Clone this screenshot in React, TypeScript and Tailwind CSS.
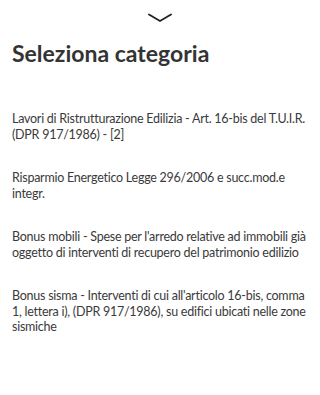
import React from "react";

const items: string[][] = [
  ["Lavori di Ristrutturazione Edilizia - Art. 16-bis del T.U.I.R.", "(DPR 917/1986) - [2]"],
  ["Risparmio Energetico Legge 296/2006 e succ.mod.e", "integr."],
  ["Bonus mobili - Spese per l'arredo relative ad immobili già", "oggetto di interventi di recupero del patrimonio edilizio"],
  ["Bonus sisma - Interventi di cui all'articolo 16-bis, comma", "1, lettera i), (DPR 917/1986), su edifici ubicati nelle zone", "sismiche"],
];

export default function App() {
  return (
    <div className="w-[320px] h-[395px] bg-white text-[#333333] overflow-hidden font-['Lato',sans-serif]">
      <div className="flex justify-center pt-[13px]">
        <svg width="24" height="10" viewBox="0 0 24 10" fill="none">
          <path d="M1 1.5 L12 8 L23 1.5" stroke="#222" strokeWidth="1.8" strokeLinecap="round" strokeLinejoin="round" />
        </svg>
      </div>
      <h1 className="px-3 mt-[15px] text-[23px] leading-[30px] font-bold text-[#333333]">Seleziona categoria</h1>
      <div className="mt-[29px] px-3 flex flex-col">
        {items.map((lines, i) => (
          <div key={i} className="py-[14px] text-[12.5px] tracking-[-0.25px] leading-[15.5px] text-[#3a3a3a]">
            {lines.map((l, j) => (
              <span key={j} className="block whitespace-nowrap">{l}</span>
            ))}
          </div>
        ))}
      </div>
    </div>
  );
}
